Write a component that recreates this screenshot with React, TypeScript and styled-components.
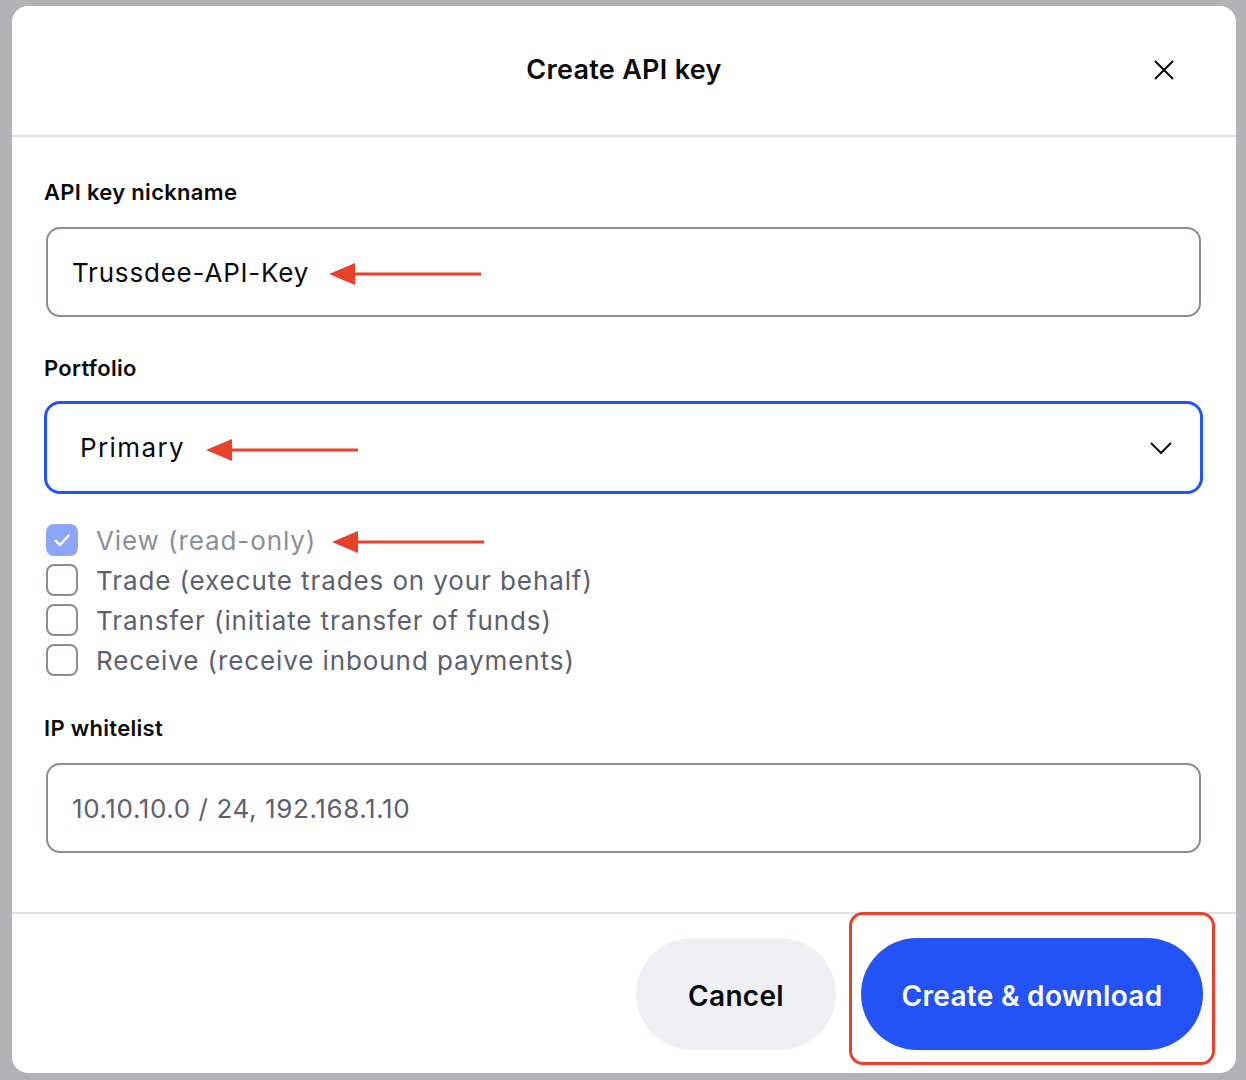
import styled, { createGlobalStyle } from 'styled-components';

const GlobalStyle = createGlobalStyle`
  * { box-sizing: border-box; }
  body {
    margin: 0;
    background: #b3b3b5;
    font-family: Inter, "Noto Sans", "Liberation Sans", sans-serif;
    color: #0a0b0d;
  }
`;

const RED = '#e8412c';
const BLUE = '#2353f6';

const permissions = [
  { label: 'View (read-only)', checked: true, disabled: true, marked: true },
  { label: 'Trade (execute trades on your behalf)' },
  { label: 'Transfer (initiate transfer of funds)' },
  { label: 'Receive (receive inbound payments)' },
];

function Arrow() {
  return (
    <ArrowSvg width='152' height='24' viewBox='0 0 152 24'>
      <path d='M0 12 L26 1 L26 23 Z' fill={RED} />
      <line x1='24' y1='12' x2='152' y2='12' stroke={RED} strokeWidth='3' />
    </ArrowSvg>
  );
}

export default function App() {
  return (
    <Page>
      <GlobalStyle />
      <Dialog>
        <Header>
          <Title>Create API key</Title>
          <CloseButton aria-label='Close'>
            <svg width='22' height='22' viewBox='0 0 22 22'>
              <path d='M2 2 L20 20 M20 2 L2 20' stroke='#0a0b0d' strokeWidth='2' />
            </svg>
          </CloseButton>
        </Header>

        <Body>
          <Label>API key nickname</Label>
          <Field>
            <FieldText>Trussdee-API-Key</FieldText>
            <Arrow />
          </Field>

          <Label $gap={19}>Portfolio</Label>
          <Select>
            <FieldText $wide>Primary</FieldText>
            <Arrow />
            <Chevron width='22' height='12' viewBox='0 0 22 12'>
              <path d='M1 1 L11 11 L21 1' fill='none' stroke='#0a0b0d' strokeWidth='2' />
            </Chevron>
          </Select>

          <CheckList>
            {permissions.map(p => (
              <CheckRow key={p.label}>
                <Box $checked={!!p.checked}>
                  {p.checked && (
                    <svg width='18' height='14' viewBox='0 0 18 14'>
                      <path d='M2 7 L7 12 L16 2' fill='none' stroke='#fff' strokeWidth='2.4' />
                    </svg>
                  )}
                </Box>
                <CheckText $disabled={!!p.disabled}>{p.label}</CheckText>
                {p.marked && <Arrow />}
              </CheckRow>
            ))}
          </CheckList>

          <Label>IP whitelist</Label>
          <Field>
            <FieldText $muted>10.10.10.0 / 24, 192.168.1.10</FieldText>
          </Field>
        </Body>

        <Footer>
          <CancelButton>Cancel</CancelButton>
          <Highlight>
            <PrimaryButton>Create &amp; download</PrimaryButton>
          </Highlight>
        </Footer>
      </Dialog>
    </Page>
  );
}

const Page = styled.div`
  padding: 6px 10px 7px 12px;
`;

const Dialog = styled.div`
  width: 1224px;
  height: 1067px;
  background: #fff;
  border-radius: 16px;
  display: flex;
  flex-direction: column;
  overflow: hidden;
`;

const Header = styled.header`
  position: relative;
  height: 131px;
  flex: none;
  display: flex;
  align-items: center;
  justify-content: center;
  border-bottom: 2px solid #dedfe3;
  padding-bottom: 2px;
`;

const Title = styled.h1`
  margin: 0;
  font-size: 27px;
  font-weight: 600;
  letter-spacing: 0.3px;
`;

const CloseButton = styled.button`
  position: absolute;
  right: 61px;
  top: 53px;
  border: 0;
  background: none;
  padding: 0;
  display: flex;
`;

const Body = styled.div`
  flex: 1;
  padding: 41px 35px 0 34px;
  display: flex;
  flex-direction: column;
`;

const Label = styled.div<{ $gap?: number }>`
  font-size: 22px;
  font-weight: 600;
  line-height: 28px;
  letter-spacing: 0.3px;
  margin-left: -2px;
  margin-bottom: ${p => p.$gap ?? 21}px;
`;

const Field = styled.div`
  height: 90px;
  border: 2px solid #8a8d96;
  border-radius: 14px;
  padding: 0 24px;
  display: flex;
  align-items: center;
  gap: 20px;
  margin-bottom: 37px;
`;

const FieldText = styled.span<{ $muted?: boolean; $wide?: boolean }>`
  font-size: 26px;
  color: ${p => (p.$muted ? '#5b616e' : '#0a0b0d')};
  letter-spacing: ${p => (p.$muted ? 0.6 : p.$wide ? 1.4 : 0.8)}px;
`;

const Select = styled.div`
  height: 93px;
  margin: 0 -2px;
  border: 3px solid ${BLUE};
  border-radius: 16px;
  padding: 0 28px 0 33px;
  display: flex;
  align-items: center;
  gap: 21px;
`;

const Chevron = styled.svg`
  margin-left: auto;
`;

const ArrowSvg = styled.svg`
  flex: none;
  margin-top: 4px;
`;

const CheckList = styled.div`
  margin: 26px 0 34px;
  display: flex;
  flex-direction: column;
`;

const CheckRow = styled.label`
  height: 40px;
  display: flex;
  align-items: center;
`;

const Box = styled.span<{ $checked: boolean }>`
  width: 32px;
  height: 32px;
  border-radius: 8px;
  margin-right: 18px;
  display: flex;
  align-items: center;
  justify-content: center;
  background: ${p => (p.$checked ? '#8ea6fa' : '#fff')};
  border: ${p => (p.$checked ? 'none' : '2px solid #8a8d96')};
`;

const CheckText = styled.span<{ $disabled: boolean }>`
  font-size: 26px;
  letter-spacing: 0.9px;
  color: ${p => (p.$disabled ? '#8a8f99' : '#5b616e')};
  margin-right: 16px;
`;

const Footer = styled.footer`
  flex: none;
  height: 161px;
  border-top: 2px solid #dedfe3;
  padding: 24px 33px 23px 0;
  display: flex;
  justify-content: flex-end;
  gap: 25px;
`;

const Pill = styled.button`
  height: 112px;
  border: 0;
  border-radius: 56px;
  font-family: inherit;
  font-size: 28px;
  font-weight: 600;
  letter-spacing: 0.3px;
  padding: 4px 0 0;
`;

const CancelButton = styled(Pill)`
  width: 200px;
  background: #eef0f3;
  color: #0a0b0d;
`;

const Highlight = styled.div`
  position: relative;
  display: flex;

  &::after {
    content: '';
    position: absolute;
    top: -26px;
    bottom: -15px;
    left: -12px;
    right: -12px;
    border: 3px solid ${RED};
    border-radius: 14px;
    pointer-events: none;
  }
`;

const PrimaryButton = styled(Pill)`
  width: 342px;
  background: ${BLUE};
  color: #fff;
`;
